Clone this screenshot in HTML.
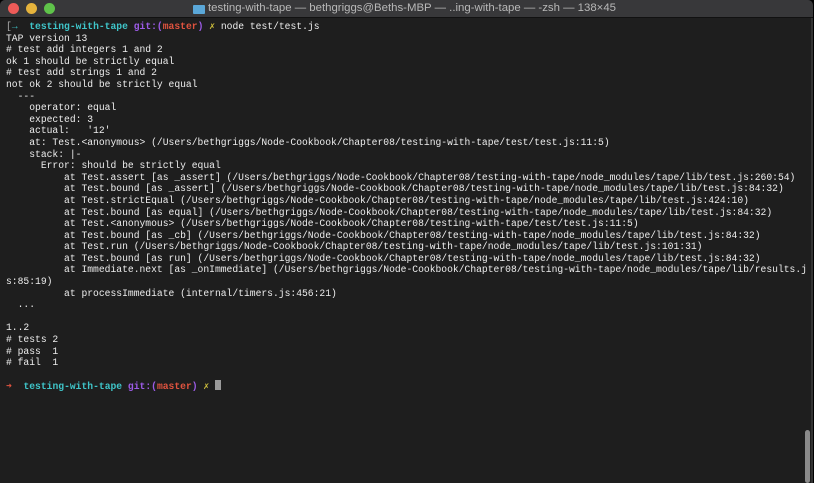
<!DOCTYPE html>
<html><head><meta charset="utf-8"><style>
html,body{margin:0;padding:0;background:#000;}
.win{position:absolute;left:0;top:0;width:813px;height:483px;background:#1e1e1e;overflow:hidden;border-radius:5px 5px 0 0;}
.title{position:absolute;left:0;top:0;width:100%;height:17px;background:#38383a;border-bottom:1px solid #111;}
.dot{position:absolute;top:3px;width:11px;height:11px;border-radius:50%;}
.ttext{position:absolute;left:208px;top:2px;font:11.4px "Liberation Sans",sans-serif;color:#b8b8b8;white-space:nowrap;}
.folder{position:absolute;left:193px;top:5px;width:12px;height:9px;background:#5aa7d8;border-radius:1px;}
pre{position:absolute;left:6px;top:21px;margin:0;font-family:"Liberation Mono",monospace;font-size:9.68px;line-height:11.6px;color:#ededed;letter-spacing:0;}
.c{color:#3fc5c9;font-weight:bold}.p{color:#9c5be6;font-weight:bold}.r{color:#e0533f;font-weight:bold}.y{color:#cfc03c;font-weight:bold}
.cur{display:inline-block;width:6px;height:10px;background:#9a9a9a;vertical-align:-1px;}
.sb{position:absolute;left:805px;top:430px;width:5px;height:53px;background:#8a8a8a;border-radius:3px;}
.rb{position:absolute;left:811px;top:18px;width:2px;height:465px;background:#333;}
</style></head><body><div class="win">
<div class="title">
<div class="dot" style="left:8px;background:#ee5b58"></div>
<div class="dot" style="left:26px;background:#e5b33c"></div>
<div class="dot" style="left:44px;background:#5fc34a"></div>
<div class="folder"></div>
<div class="ttext">testing-with-tape — bethgriggs@Beths-MBP — ..ing-with-tape — -zsh — 138×45</div>
</div>
<pre><span style="color:#aaa">[</span><span class="c">→  testing-with-tape</span> <span class="p">git:(</span><span class="r">master</span><span class="p">)</span> <span class="y">✗</span> node test/test.js
TAP version 13
# test add integers 1 and 2
ok 1 should be strictly equal
# test add strings 1 and 2
not ok 2 should be strictly equal
  ---
    operator: equal
    expected: 3
    actual:   '12'
    at: Test.&lt;anonymous&gt; (/Users/bethgriggs/Node-Cookbook/Chapter08/testing-with-tape/test/test.js:11:5)
    stack: |-
      Error: should be strictly equal
          at Test.assert [as _assert] (/Users/bethgriggs/Node-Cookbook/Chapter08/testing-with-tape/node_modules/tape/lib/test.js:260:54)
          at Test.bound [as _assert] (/Users/bethgriggs/Node-Cookbook/Chapter08/testing-with-tape/node_modules/tape/lib/test.js:84:32)
          at Test.strictEqual (/Users/bethgriggs/Node-Cookbook/Chapter08/testing-with-tape/node_modules/tape/lib/test.js:424:10)
          at Test.bound [as equal] (/Users/bethgriggs/Node-Cookbook/Chapter08/testing-with-tape/node_modules/tape/lib/test.js:84:32)
          at Test.&lt;anonymous&gt; (/Users/bethgriggs/Node-Cookbook/Chapter08/testing-with-tape/test/test.js:11:5)
          at Test.bound [as _cb] (/Users/bethgriggs/Node-Cookbook/Chapter08/testing-with-tape/node_modules/tape/lib/test.js:84:32)
          at Test.run (/Users/bethgriggs/Node-Cookbook/Chapter08/testing-with-tape/node_modules/tape/lib/test.js:101:31)
          at Test.bound [as run] (/Users/bethgriggs/Node-Cookbook/Chapter08/testing-with-tape/node_modules/tape/lib/test.js:84:32)
          at Immediate.next [as _onImmediate] (/Users/bethgriggs/Node-Cookbook/Chapter08/testing-with-tape/node_modules/tape/lib/results.j
s:85:19)
          at processImmediate (internal/timers.js:456:21)
  ...

1..2
# tests 2
# pass  1
# fail  1

<span class="r">➜</span>  <span class="c">testing-with-tape</span> <span class="p">git:(</span><span class="r">master</span><span class="p">)</span> <span class="y">✗</span> <span class="cur"></span></pre>
<div class="rb"></div>
<div class="sb"></div>
</div></body></html>
